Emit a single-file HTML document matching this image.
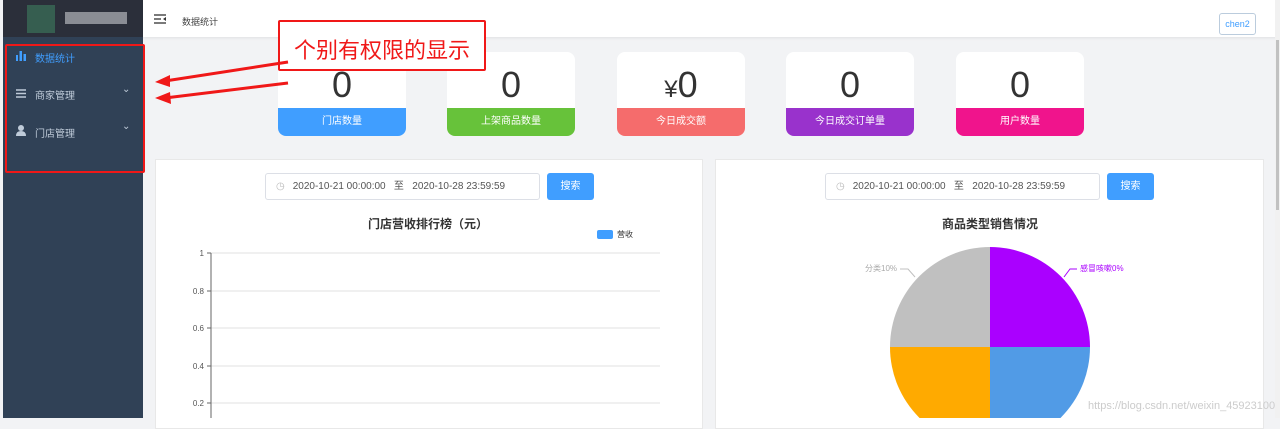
<!DOCTYPE html>
<html><head><meta charset="utf-8"><style>
*{margin:0;padding:0;box-sizing:border-box}
body{width:1280px;height:418px;overflow:hidden;background:#f2f3f5;font-family:"Liberation Sans","Noto Sans CJK SC",sans-serif;position:relative}
.abs{position:absolute}
.side{left:3px;top:0;width:140px;height:418px;background:#304156}
.logo{left:3px;top:0;width:140px;height:37px;background:#2b2f3a}
.menu{color:#bfcbd9;font-size:10px}
.card{background:#fff;border-radius:8px;overflow:hidden;width:128px;height:84px}
.card .n{height:56px;text-align:center;font-size:36px;line-height:66px;color:#333}
.card .l{height:28px;color:#fff;font-size:10px;text-align:center;line-height:28px}
.panel{background:#fff;border:1px solid #e8e8e8}
.date{border:1px solid #dcdfe6;border-radius:3px;background:#fff;width:275px;height:27px;font-size:10px;color:#555;line-height:25px}
.btn{background:#409eff;color:#fff;font-size:10px;width:47px;height:27px;border-radius:3px;text-align:center;line-height:27px}
</style></head><body>
<div class="abs side"></div>
<div class="abs logo"><div class="abs" style="left:24px;top:5px;width:28px;height:28px;background:#3a6a56;opacity:.8"></div><div class="abs" style="left:62px;top:12px;width:62px;height:12px;background:#8a8d94"></div></div>
<svg class="abs" style="left:16px;top:51px" width="10" height="10"><rect x="0" y="4" width="2" height="6" fill="#409eff"/><rect x="3.5" y="0" width="2.5" height="10" fill="#409eff"/><rect x="7.5" y="3" width="2.5" height="7" fill="#409eff"/></svg>
<div class="abs menu" style="left:35px;top:50px;color:#409eff">数据统计</div>
<svg class="abs" style="left:16px;top:89px" width="10" height="9"><g stroke="#bfcbd9" stroke-width="1.5"><line x1="0" y1="1" x2="10" y2="1"/><line x1="0" y1="4.5" x2="10" y2="4.5"/><line x1="0" y1="8" x2="10" y2="8"/></g></svg>
<div class="abs menu" style="left:35px;top:87px">商家管理</div>
<div class="abs menu" style="left:122px;top:84px">⌄</div>
<svg class="abs" style="left:16px;top:125px" width="10" height="11"><circle cx="5" cy="3" r="3" fill="#bfcbd9"/><path d="M0 11 Q0 6 5 6 Q10 6 10 11Z" fill="#bfcbd9"/></svg>
<div class="abs menu" style="left:35px;top:125px">门店管理</div>
<div class="abs menu" style="left:122px;top:121px">⌄</div>
<div class="abs" style="left:5px;top:44px;width:140px;height:129px;border:2px solid #f01818;border-radius:2px"></div>
<div class="abs" style="left:143px;top:0;width:1137px;height:37px;background:#fff;box-shadow:0 1px 3px rgba(0,0,0,.08)"></div>
<svg class="abs" style="left:154px;top:14px" width="12" height="10"><g stroke="#333" stroke-width="1.3"><line x1="0" y1="1" x2="12" y2="1"/><line x1="0" y1="5" x2="7" y2="5"/><line x1="0" y1="9" x2="12" y2="9"/></g><path d="M12 3 L9 5 L12 7Z" fill="#333"/></svg>
<div class="abs" style="left:182px;top:15px;font-size:9px;color:#444">数据统计</div>
<div class="abs" style="left:1219px;top:13px;width:37px;height:22px;border:1px solid #bcd;border-radius:3px;font-size:9px;color:#409eff;text-align:center;line-height:20px">chen2</div>
<div class="abs" style="left:1275px;top:0;width:5px;height:418px;background:#f1f1f1"></div>
<div class="abs" style="left:1276px;top:40px;width:3px;height:170px;background:#c1c1c1"></div>
<div class="abs card" style="left:278px;top:52px"><div class="n">0</div><div class="l" style="background:#409eff">门店数量</div></div>
<div class="abs card" style="left:447px;top:52px"><div class="n">0</div><div class="l" style="background:#67c23a">上架商品数量</div></div>
<div class="abs card" style="left:617px;top:52px"><div class="n"><span style="font-size:24px">¥</span>0</div><div class="l" style="background:#f56c6c">今日成交额</div></div>
<div class="abs card" style="left:786px;top:52px"><div class="n">0</div><div class="l" style="background:#9932cc">今日成交订单量</div></div>
<div class="abs card" style="left:956px;top:52px"><div class="n">0</div><div class="l" style="background:#f0148c">用户数量</div></div>
<div class="abs" style="left:278px;top:20px;width:208px;height:51px;border:2px solid #f01818;background:#fff;border-radius:2px;font-size:22px;color:#f01818;text-align:center;line-height:57px">个别有权限的显示</div>
<svg class="abs" style="left:150px;top:55px" width="150" height="50"><g stroke="#f01818" stroke-width="3" fill="#f01818"><line x1="138" y1="7" x2="15" y2="26"/><line x1="138" y1="28" x2="15" y2="43"/><polygon points="5,27 20,20 20,32" stroke="none"/><polygon points="5,43 20,37 21,49" stroke="none"/></g></svg>
<div class="abs panel" style="left:155px;top:159px;width:548px;height:270px"></div>
<div class="abs panel" style="left:715px;top:159px;width:549px;height:270px"></div>
<div class="abs date" style="left:265px;top:173px"><span style="color:#bbb;margin:0 8px 0 10px">◷</span>2020-10-21 00:00:00 &nbsp;&nbsp;至&nbsp;&nbsp; 2020-10-28 23:59:59</div>
<div class="abs btn" style="left:547px;top:173px">搜索</div>
<div class="abs date" style="left:825px;top:173px"><span style="color:#bbb;margin:0 8px 0 10px">◷</span>2020-10-21 00:00:00 &nbsp;&nbsp;至&nbsp;&nbsp; 2020-10-28 23:59:59</div>
<div class="abs btn" style="left:1107px;top:173px">搜索</div>
<div class="abs" style="left:368px;top:215px;font-size:12px;font-weight:bold;color:#333">门店营收排行榜（元）</div>
<div class="abs" style="left:597px;top:230px;width:16px;height:9px;background:#409eff;border-radius:2px"></div>
<div class="abs" style="left:617px;top:229px;font-size:8px;color:#333">营收</div>
<svg class="abs" style="left:170px;top:245px" width="500" height="173" font-size="8" fill="#555" font-family="Liberation Sans">
<g stroke="#e0e0e0"><line x1="41" y1="8" x2="490" y2="8"/><line x1="41" y1="46" x2="490" y2="46"/><line x1="41" y1="83" x2="490" y2="83"/><line x1="41" y1="121" x2="490" y2="121"/><line x1="41" y1="158" x2="490" y2="158"/></g>
<line x1="41" y1="8" x2="41" y2="173" stroke="#666"/>
<g stroke="#666"><line x1="37" y1="8" x2="41" y2="8"/><line x1="37" y1="46" x2="41" y2="46"/><line x1="37" y1="83" x2="41" y2="83"/><line x1="37" y1="121" x2="41" y2="121"/><line x1="37" y1="158" x2="41" y2="158"/></g>
<g text-anchor="end"><text x="34" y="11">1</text><text x="34" y="49">0.8</text><text x="34" y="86">0.6</text><text x="34" y="124">0.4</text><text x="34" y="161">0.2</text></g>
</svg>
<div class="abs" style="left:942px;top:215px;font-size:12px;font-weight:bold;color:#333">商品类型销售情况</div>
<svg class="abs" style="left:850px;top:240px" width="300" height="178" font-size="8" font-family="Liberation Sans,Noto Sans CJK SC">
<path d="M140 107 L140 7 A100 100 0 0 1 240 107 Z" fill="#aa00ff"/>
<path d="M140 107 L240 107 A100 100 0 0 1 140 207 Z" fill="#519be6"/>
<path d="M140 107 L140 207 A100 100 0 0 1 40 107 Z" fill="#ffaa00"/>
<path d="M140 107 L40 107 A100 100 0 0 1 140 7 Z" fill="#c0c0c0"/>
<polyline points="65,37 58,29 50,29" fill="none" stroke="#c0c0c0"/>
<polyline points="214,37 220,29 227,29" fill="none" stroke="#aa00ff"/>
<text x="15" y="31" fill="#aaa">分类10%</text>
<text x="230" y="31" fill="#aa00ff">感冒咳嗽0%</text>
</svg>
<div class="abs" style="left:1088px;top:400px;font-size:11px;color:#ccc">https://blog.csdn.net/weixin_45923100</div>
</body></html>
